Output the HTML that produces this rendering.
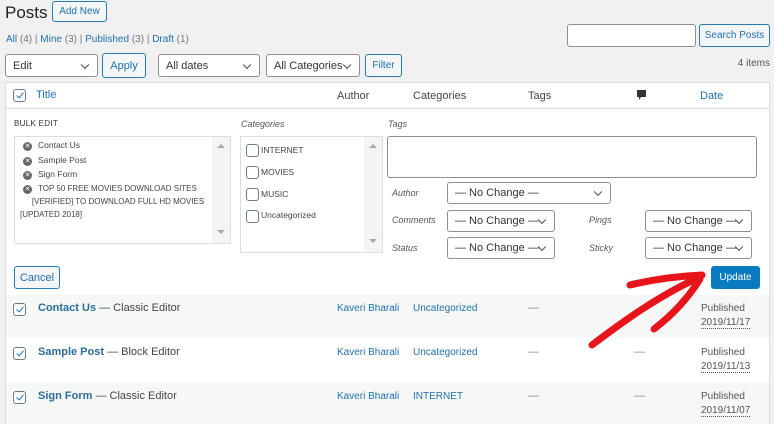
<!DOCTYPE html>
<html><head><meta charset="utf-8"><style>
*{box-sizing:border-box;margin:0;padding:0}
body{width:774px;height:424px;overflow:hidden;background:#f1f1f1;font-family:"Liberation Sans",sans-serif;font-size:11px;color:#444;position:relative}
.a{position:absolute}
.btn{position:absolute;border:1px solid #2a7bab;border-radius:3px;background:#f3f5f6;color:#2271b1;font-size:11px;display:flex;align-items:center;justify-content:center}
.sel{position:absolute;border:1px solid #8c8f94;border-radius:3px;background:#fff;color:#333;font-size:11px;padding-left:7px;display:flex;align-items:center}
.sel:after{content:"";position:absolute;right:9px;top:50%;width:5px;height:5px;border-right:1.3px solid #444;border-bottom:1.3px solid #444;transform:translateY(-70%) rotate(45deg)}
.link{color:#2271b1}
.cb{position:absolute;width:13px;height:13px;border:1px solid #6b7c8a;border-radius:3px;background:#fff}
.cb.on:after{content:"";position:absolute;left:3.5px;top:1px;width:3px;height:6px;border-right:1.6px solid #2271b1;border-bottom:1.6px solid #2271b1;transform:rotate(40deg)}
.it{font-style:italic;font-size:9px;color:#555}
.x{display:inline-block;width:9px;height:9px;border-radius:50%;background:#666;color:#fff;font-size:7px;line-height:9px;text-align:center;margin-right:6px}
.sb{position:absolute;right:0;top:0;width:18px;background:#f4f4f4}
.sb:before,.sb:after{content:"";position:absolute;left:5px;border-left:4px solid transparent;border-right:4px solid transparent}
.sb:before{top:7px;border-bottom:4px solid #aaa}
.sb:after{bottom:9px;border-top:4px solid #aaa}
</style></head><body>
<div class="a" style="left:5px;top:3px;font-size:17px;color:#222">Posts</div>
<div class="btn" style="left:52px;top:1px;width:55px;height:21px;font-size:10px">Add New</div>
<div class="a" style="left:6px;top:34px;font-size:10px;color:#777"><span class="link">All</span> (4) | <span class="link">Mine</span> (3) | <span class="link">Published</span> (3) | <span class="link">Draft</span> (1)</div>
<div class="a" style="left:567px;top:24px;width:129px;height:23px;border:1px solid #8c8f94;border-radius:3px;background:#fff"></div>
<div class="btn" style="left:699px;top:24px;width:71px;height:23px;font-size:10px">Search Posts</div>
<div class="sel" style="left:5px;top:54px;width:93px;height:23px">Edit</div>
<div class="btn" style="left:102px;top:53px;width:44px;height:25px;border-width:1.5px;font-size:11px">Apply</div>
<div class="sel" style="left:158px;top:54px;width:102px;height:23px">All dates</div>
<div class="sel" style="left:266px;top:54px;width:94px;height:23px">All Categories</div>
<div class="btn" style="left:365px;top:54px;width:37px;height:23px;font-size:10px">Filter</div>
<div class="a" style="right:4px;top:58px;font-size:10px;color:#555">4 items</div>
<div class="a" style="left:5px;top:82px;width:765px;height:342px;background:#fff;border:1px solid #dcdcde"></div>
<div class="a" style="left:5px;top:108px;width:765px;height:1px;background:#dcdcde"></div>
<div class="cb on" style="left:13px;top:89px"></div>
<div class="a link" style="left:36px;top:89px;font-size:11px">Title</div>
<div class="a" style="left:337px;top:90px;font-size:11px">Author</div>
<div class="a" style="left:413px;top:90px;font-size:11px">Categories</div>
<div class="a" style="left:528px;top:90px;font-size:11px">Tags</div>
<svg class="a" style="left:636px;top:89px" width="11" height="12"><path d="M1 1h9v7H5l-2 3V8H1z" fill="#333"/></svg>
<div class="a link" style="left:700px;top:90px;font-size:11px">Date</div>
<div class="a" style="left:14px;top:119px;font-size:8px;letter-spacing:.3px;color:#333">BULK EDIT</div>
<div class="a it" style="left:241px;top:119px">Categories</div>
<div class="a it" style="left:388px;top:119px">Tags</div>
<div class="a" style="left:14px;top:136px;width:217px;height:108px;border:1px solid #ddd;background:#fff;font-size:8.5px;line-height:14.5px;padding:1px 0 0 8px;color:#444">
<div><span class="x">✕</span>Contact Us</div><div><span class="x">✕</span>Sample Post</div><div><span class="x">✕</span>Sign Form</div>
<div style="line-height:13px;font-size:8px"><span class="x">✕</span>TOP 50 FREE MOVIES DOWNLOAD SITES<br>&nbsp;&nbsp;&nbsp;&nbsp;[VERIFIED] TO DOWNLOAD FULL HD MOVIES<br><span style="margin-left:-3px">[UPDATED 2018]</span></div>
<div class="sb" style="height:106px"></div>
</div>
<div class="a" style="left:240px;top:136px;width:143px;height:117px;border:1px solid #ddd;background:#fff;font-size:8.5px;color:#444">
<div class="sb" style="height:115px"></div>
<div class="cb" style="left:5px;top:7px"></div><div class="a" style="left:20px;top:8px">INTERNET</div>
<div class="cb" style="left:5px;top:29px"></div><div class="a" style="left:20px;top:30px">MOVIES</div>
<div class="cb" style="left:5px;top:51px"></div><div class="a" style="left:20px;top:52px">MUSIC</div>
<div class="cb" style="left:5px;top:73px"></div><div class="a" style="left:20px;top:73px">Uncategorized</div>
</div>
<div class="a" style="left:387px;top:136px;width:370px;height:42px;border:1px solid #8c8f94;border-radius:3px;background:#fff"></div>
<div class="a it" style="left:392px;top:188px">Author</div>
<div class="a it" style="left:392px;top:215px">Comments</div>
<div class="a it" style="left:392px;top:243px">Status</div>
<div class="a it" style="left:589px;top:215px">Pings</div>
<div class="a it" style="left:589px;top:243px">Sticky</div>
<div class="sel" style="left:447px;top:182px;width:164px;height:22px">— No Change —</div>
<div class="sel" style="left:447px;top:210px;width:108px;height:22px">— No Change —</div>
<div class="sel" style="left:447px;top:237px;width:108px;height:22px">— No Change —</div>
<div class="sel" style="left:645px;top:210px;width:107px;height:22px">— No Change —</div>
<div class="sel" style="left:645px;top:237px;width:107px;height:22px">— No Change —</div>
<div class="btn" style="left:14px;top:266px;width:46px;height:23px">Cancel</div>
<div class="a" style="left:711px;top:266px;width:49px;height:23px;background:#0a7bc1;border-radius:3px;color:#fff;font-size:10px;display:flex;align-items:center;justify-content:center">Update</div>
<div class="a" style="left:6px;top:295px;width:763px;height:43px;background:#f6f7f7"></div>
<div class="a" style="left:6px;top:382px;width:763px;height:42px;background:#f6f7f7"></div>
<div class="cb on" style="left:13px;top:303px"></div>
<div class="cb on" style="left:13px;top:347px"></div>
<div class="cb on" style="left:13px;top:391px"></div>
<div class="a" style="left:38px;top:302px;font-size:11px;color:#444"><b style="color:#2c6d98">Contact Us</b> — Classic Editor</div>
<div class="a" style="left:38px;top:346px;font-size:11px;color:#444"><b style="color:#2c6d98">Sample Post</b> — Block Editor</div>
<div class="a" style="left:38px;top:390px;font-size:11px;color:#444"><b style="color:#2c6d98">Sign Form</b> — Classic Editor</div>
<div class="a link" style="left:337px;top:303px;font-size:10px">Kaveri Bharali</div>
<div class="a link" style="left:337px;top:347px;font-size:10px">Kaveri Bharali</div>
<div class="a link" style="left:337px;top:391px;font-size:10px">Kaveri Bharali</div>
<div class="a link" style="left:413px;top:303px;font-size:10px">Uncategorized</div>
<div class="a link" style="left:413px;top:347px;font-size:10px">Uncategorized</div>
<div class="a link" style="left:413px;top:391px;font-size:10px">INTERNET</div>
<div class="a" style="left:528px;top:302px;color:#888">—</div>
<div class="a" style="left:528px;top:346px;color:#888">—</div>
<div class="a" style="left:528px;top:390px;color:#888">—</div>
<div class="a" style="left:634px;top:346px;color:#888">—</div>
<div class="a" style="left:634px;top:390px;color:#888">—</div>
<div class="a" style="left:701px;top:302px;font-size:10px;line-height:14px;color:#555">Published<br><span style="border-bottom:1px dotted #555">2019/11/17</span></div>
<div class="a" style="left:701px;top:346px;font-size:10px;line-height:14px;color:#555">Published<br><span style="border-bottom:1px dotted #555">2019/11/13</span></div>
<div class="a" style="left:701px;top:390px;font-size:10px;line-height:14px;color:#555">Published<br><span style="border-bottom:1px dotted #555">2019/11/07</span></div>
<svg class="a" style="left:580px;top:265px" width="130" height="90"><g stroke="#e8141b" stroke-width="7" stroke-linecap="round" fill="none"><path d="M12 80 C45 55 80 30 120 12"/><path d="M50 20 C75 14 100 11 122 10"/><path d="M120 14 C110 30 95 48 74 64"/></g></svg>
</body></html>
